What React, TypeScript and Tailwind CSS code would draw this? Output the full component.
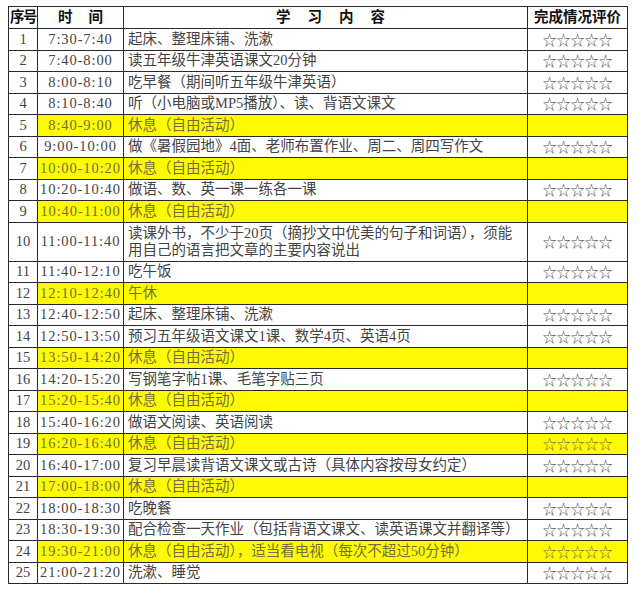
import React from "react";

type Row = {
  no: number;
  time: string;
  task: React.ReactNode;
  rest?: boolean;
  stars?: boolean;
  tall?: boolean;
};

const REST = "休息（自由活动）";

const ROWS: Row[] = [
  { no: 1, time: "7:30-7:40", task: "起床、整理床铺、洗漱", stars: true },
  { no: 2, time: "7:40-8:00", task: "读五年级牛津英语课文20分钟", stars: true },
  { no: 3, time: "8:00-8:10", task: "吃早餐（期间听五年级牛津英语）", stars: true },
  { no: 4, time: "8:10-8:40", task: "听（小电脑或MP5播放）、读、背语文课文", stars: true },
  { no: 5, time: "8:40-9:00", task: REST, rest: true },
  { no: 6, time: "9:00-10:00", task: "做《暑假园地》4面、老师布置作业、周二、周四写作文", stars: true },
  { no: 7, time: "10:00-10:20", task: REST, rest: true },
  { no: 8, time: "10:20-10:40", task: "做语、数、英一课一练各一课", stars: true },
  { no: 9, time: "10:40-11:00", task: REST, rest: true },
  {
    no: 10,
    time: "11:00-11:40",
    task: (
      <>
        读课外书，不少于20页（摘抄文中优美的句子和词语），须能
        <br />
        用自己的语言把文章的主要内容说出
      </>
    ),
    stars: true,
    tall: true,
  },
  { no: 11, time: "11:40-12:10", task: "吃午饭", stars: true },
  { no: 12, time: "12:10-12:40", task: "午休", rest: true },
  { no: 13, time: "12:40-12:50", task: "起床、整理床铺、洗漱", stars: true },
  { no: 14, time: "12:50-13:50", task: "预习五年级语文课文1课、数学4页、英语4页", stars: true },
  { no: 15, time: "13:50-14:20", task: REST, rest: true },
  { no: 16, time: "14:20-15:20", task: "写钢笔字帖1课、毛笔字贴三页", stars: true },
  { no: 17, time: "15:20-15:40", task: REST, rest: true },
  { no: 18, time: "15:40-16:20", task: "做语文阅读、英语阅读", stars: true },
  { no: 19, time: "16:20-16:40", task: REST, rest: true, stars: true },
  { no: 20, time: "16:40-17:00", task: "复习早晨读背语文课文或古诗（具体内容按母女约定）", stars: true },
  { no: 21, time: "17:00-18:00", task: REST, rest: true },
  { no: 22, time: "18:00-18:30", task: "吃晚餐", stars: true },
  { no: 23, time: "18:30-19:30", task: "配合检查一天作业（包括背语文课文、读英语课文并翻译等）", stars: true },
  { no: 24, time: "19:30-21:00", task: "休息（自由活动），适当看电视（每次不超过50分钟）", rest: true, stars: true },
  { no: 25, time: "21:00-21:20", task: "洗漱、睡觉", stars: true },
];

const cell = "border border-[#2a2a2a] p-0 align-middle whitespace-nowrap overflow-hidden";

export default function App() {
  return (
    <div
      className="w-[640px] h-[592px] bg-white pt-[6px] pl-[8px] overflow-hidden"
      style={{ fontFamily: '"Liberation Serif", "Noto Sans CJK SC", serif' }}
    >
      <table className="table-fixed border-collapse w-[619px] text-[14.5px] leading-[17px] text-[#444]">
        <colgroup>
          <col className="w-[29px]" />
          <col className="w-[86px]" />
          <col className="w-[404px]" />
          <col className="w-[100px]" />
        </colgroup>
        <thead>
          <tr className="h-[22px] font-bold text-[#111]">
            <th className={`${cell} text-center tracking-[-1.5px]`}>序号</th>
            <th className={cell}>
              <div className="flex justify-center gap-[16px]">
                <span>时</span>
                <span>间</span>
              </div>
            </th>
            <th className={cell}>
              <div className="flex justify-center gap-[17px] pl-[10px]">
                <span>学</span>
                <span>习</span>
                <span>内</span>
                <span>容</span>
              </div>
            </th>
            <th className={`${cell} text-center`}>完成情况评价</th>
          </tr>
        </thead>
        <tbody>
          {ROWS.map((r) => {
            const fill = r.rest ? "bg-[#fdfa04] text-[#75703a]" : "";
            return (
              <tr key={r.no} className={r.tall ? "h-[39px]" : "h-[21.5px]"}>
                <td className={`${cell} text-center`}>{r.no}</td>
                <td className={`${cell} text-center tracking-[0.9px] ${fill}`}>{r.time}</td>
                <td className={`${cell} pl-[4px] ${fill}`}>{r.task}</td>
                <td
                  className={`${cell} text-center text-[14px] text-[#555] ${fill}`}
                  style={{ fontFamily: '"Noto Sans CJK SC", sans-serif' }}
                >
                  {r.stars ? "☆☆☆☆☆" : ""}
                </td>
              </tr>
            );
          })}
        </tbody>
      </table>
    </div>
  );
}
